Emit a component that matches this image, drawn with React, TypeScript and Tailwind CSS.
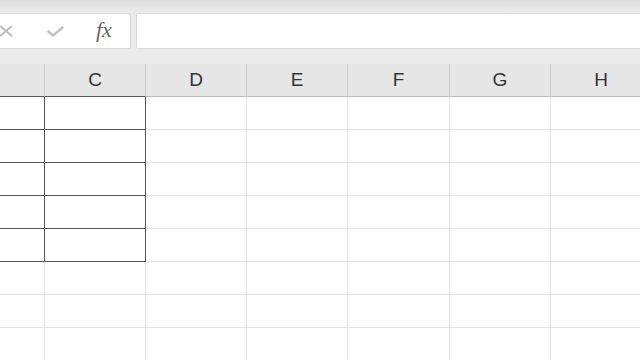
const columns = ["B", "C", "D", "E", "F", "G", "H"];
const widths = ["w-[45px]", "w-[101px]", "w-[101px]", "w-[101px]", "w-[102px]", "w-[101px]", "w-[101px]"];
const rows = [1, 2, 3, 4, 5, 6, 7, 8];

function inBox(col: number, row: number) {
  return col <= 1 && row <= 5;
}

export default function App() {
  return (
    <div className="w-[640px] h-[360px] overflow-hidden bg-white font-['Liberation_Sans',Arial,sans-serif]">
      {/* Formula bar */}
      <div className="h-[64px] bg-gradient-to-b from-[#dcdcdc] via-[#ebebeb] via-[18%] to-[#ebebeb] pt-[13px] flex items-start">
        <div className="ml-[-20px] w-[151px] h-[36px] bg-white border border-[#d9d9d9] rounded-[2px] flex items-center pl-[18px]">
          <svg width="14" height="12" viewBox="0 0 14 12" className="shrink-0">
            <path d="M1 1 L13 11 M13 1 L1 11" stroke="#bdbdbd" strokeWidth="2" fill="none" />
          </svg>
          <svg width="17" height="11" viewBox="0 0 17 11" className="ml-[34px] shrink-0">
            <path d="M1.5 5.5 L6 9.5 L15.5 1.5" stroke="#c2c2c2" strokeWidth="2.6" fill="none" strokeLinecap="round" strokeLinejoin="round" />
          </svg>
          <span className="ml-[32px] font-['Liberation_Serif',serif] italic text-[22px] leading-none text-[#666] mt-[-3px]">
            fx
          </span>
        </div>
        <div className="ml-[5px] flex-1 h-[36px] bg-white border border-[#d9d9d9] rounded-[2px] mr-[-4px]" />
      </div>

      {/* Column header */}
      <div className="flex h-[33px] bg-[#e6e6e6]">
        {columns.map((c, i) => (
          <div
            key={c}
            className={`${widths[i]} shrink-0 flex items-center justify-center border-r border-b ${
              i <= 1 ? "border-b-[#5a5a5a]" : "border-b-[#bcbcbc]"
            } border-r-[#cacaca] text-[19px] text-[#333]`}
          >
            {i === 0 ? "" : c}
          </div>
        ))}
      </div>

      {/* Grid */}
      {rows.map((r) => (
        <div key={r} className="flex h-[33px]">
          {columns.map((c, i) => (
            <div
              key={c}
              className={`${widths[i]} shrink-0 border-r border-b ${
                inBox(i, r) ? "border-r-[#555] border-b-[#555]" : "border-r-[#e3e3e3] border-b-[#e3e3e3]"
              } ${i === 1 && r > 5 ? "" : ""}`}
            />
          ))}
        </div>
      ))}
    </div>
  );
}
